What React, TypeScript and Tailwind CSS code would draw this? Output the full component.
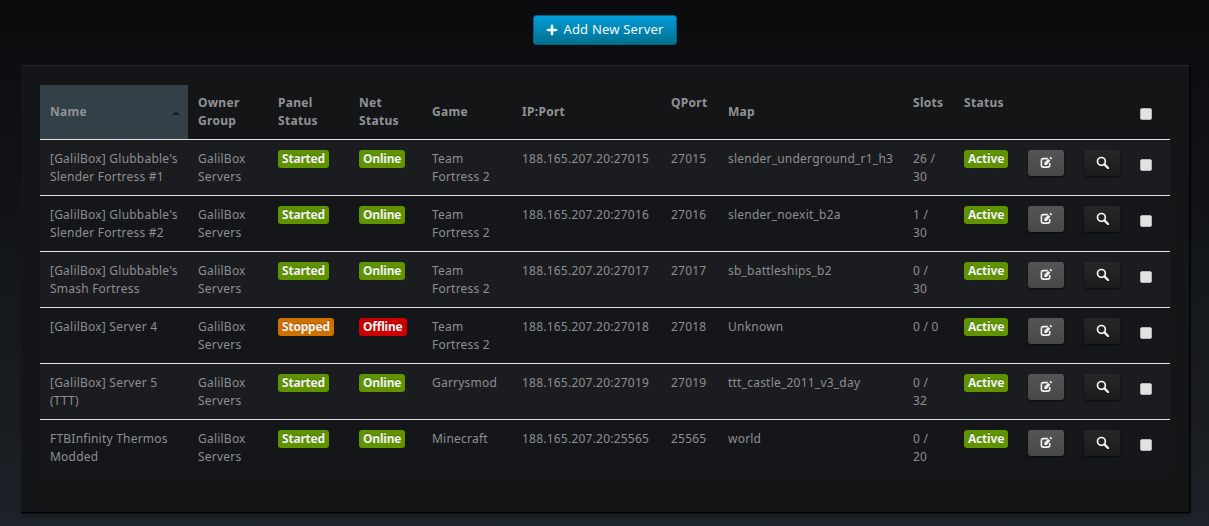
import { Plus } from 'lucide-react';

const servers = [
  { name: "[GalilBox] Glubbable's Slender Fortress #1", game: 'Team Fortress 2', ip: '188.165.207.20:27015', qport: '27015', map: 'slender_underground_r1_h3', slots: '26 / 30', up: true },
  { name: "[GalilBox] Glubbable's Slender Fortress #2", game: 'Team Fortress 2', ip: '188.165.207.20:27016', qport: '27016', map: 'slender_noexit_b2a', slots: '1 / 30', up: true },
  { name: "[GalilBox] Glubbable's Smash Fortress", game: 'Team Fortress 2', ip: '188.165.207.20:27017', qport: '27017', map: 'sb_battleships_b2', slots: '0 / 30', up: true },
  { name: '[GalilBox] Server 4', game: 'Team Fortress 2', ip: '188.165.207.20:27018', qport: '27018', map: 'Unknown', slots: '0 / 0', up: false },
  { name: '[GalilBox] Server 5 (TTT)', game: 'Garrysmod', ip: '188.165.207.20:27019', qport: '27019', map: 'ttt_castle_2011_v3_day', slots: '0 / 32', up: true },
  { name: 'FTBInfinity Thermos Modded', game: 'Minecraft', ip: '188.165.207.20:25565', qport: '25565', map: 'world', slots: '0 / 20', up: true },
];

const widths = [148, 80, 81, 73, 90, 149, 57, 185, 51, 64, 56, 56, 40];

function Badge({ color, children }: { color: string; children: string }) {
  return (
    <span className={`inline-block rounded-[3px] px-[4px] h-[18px] leading-[17px] text-[12px] font-bold tracking-[-0.2px] text-[#f2f2f2] align-top [text-shadow:0_-1px_0_rgba(0,0,0,0.25)] ${color}`}>
      {children}
    </span>
  );
}

function Check() {
  return <div className="size-[12px] rounded-[2px] bg-[#e2e2e2] border border-[#b5b5b5]" />;
}

function EditIcon() {
  return (
    <svg width="13" height="13" viewBox="0 0 13 13" fill="none" stroke="#f0f0f0" strokeWidth="1.6">
      <path d="M8 2.6H3.2Q1.4 2.6 1.4 4.4v4.8q0 1.9 1.9 1.9h4.6q1.8 0 1.8-1.9V7" />
      <path d="M4.4 6.6L4.4 9L6.8 9L10.4 4.6L8.3 3Z" fill="#f0f0f0" stroke="none" />
      <path d="M10 1.4L11.6 2.8" strokeWidth="1.7" />
    </svg>
  );
}

function SearchIcon() {
  return (
    <svg width="13" height="13" viewBox="0 0 13 13" fill="none" stroke="#f4f4f4">
      <circle cx="5.4" cy="5.4" r="3.9" strokeWidth="1.7" />
      <path d="M8.4 8.4L12 12" strokeWidth="2.3" strokeLinecap="round" />
    </svg>
  );
}

export default function App() {
  const th = 'px-[10px] text-left align-middle font-bold text-[12px] leading-[18px] text-[#8f9396] tracking-[0.3px]';
  const td = 'px-[10px] pt-[10px] align-top';
  const tdBadge = 'px-[10px] pt-[10px] align-top';

  return (
    <div className="w-[1209px] h-[526px] overflow-hidden bg-gradient-to-b from-[#0a0b0d] to-[#1d2228] font-['Noto_Sans','Open_Sans',sans-serif]">
      <div className="flex justify-center pt-[15px] h-[65px]">
        <button className="h-[30px] w-[144px] flex items-center justify-center gap-[4px] rounded-[3px] border border-[#04607f] bg-gradient-to-b from-[#049cdb] to-[#02708f] text-[13px] tracking-[0.2px] text-[#f4f8fa]">
          <Plus size={14} strokeWidth={4.5} />
          Add New Server
        </button>
      </div>

      <div className="ml-[21px] w-[1169px] h-[448px] bg-[#141517] border-t border-t-[#25272a] border-r border-r-black border-b border-b-black shadow-[1px_1px_2px_rgba(0,0,0,0.6)] pt-[19px] pl-[19px]">
        <table className="w-[1130px] table-fixed border-collapse text-[12px] leading-[18px] tracking-[0.22px] text-[#8c8f92]">
          <colgroup>
            {widths.map((w, i) => (
              <col key={i} width={w} />
            ))}
          </colgroup>
          <thead>
            <tr className="h-[54px] border-b border-[#e4e4e4]">
              <th className={`${th} bg-[#334047] relative`}>
                Name
                <span className="absolute right-[8px] top-[26px] border-x-[4px] border-x-transparent border-b-[4px] border-b-[#1a2024]" />
              </th>
              <th className={th}>Owner<br />Group</th>
              <th className={th}>Panel<br />Status</th>
              <th className={th}>Net<br />Status</th>
              <th className={th}>Game</th>
              <th className={th}>IP:Port</th>
              <th className={`${th} !align-top pt-[9px]`}>QPort</th>
              <th className={th}>Map</th>
              <th className={`${th} !align-top pt-[9px]`}>Slots</th>
              <th className={`${th} !align-top pt-[9px]`}>Status</th>
              <th className={th} />
              <th className={th} />
              <th className={th}><div className="mt-[4px]"><Check /></div></th>
            </tr>
          </thead>
          <tbody>
            {servers.map((s, i) => (
              <tr key={s.ip} className={`h-[56px] border-b border-[#e4e4e4] last:border-b-0 ${i % 2 === 0 ? 'bg-[#1b1c1f]' : 'bg-[#151619]'}`}>
                <td className={td}>{s.name}</td>
                <td className={td}>GalilBox Servers</td>
                <td className={tdBadge}>
                  {s.up ? <Badge color="bg-[#5f9300]">Started</Badge> : <Badge color="bg-[#cf7000]">Stopped</Badge>}
                </td>
                <td className={tdBadge}>
                  {s.up ? <Badge color="bg-[#5f9300]">Online</Badge> : <Badge color="bg-[#cc0000]">Offline</Badge>}
                </td>
                <td className={td}>{s.game}</td>
                <td className={td}>{s.ip}</td>
                <td className={td}>{s.qport}</td>
                <td className={td}>{s.map}</td>
                <td className={td}>{s.slots}</td>
                <td className={tdBadge}><Badge color="bg-[#5f9300]">Active</Badge></td>
                <td className={tdBadge}>
                  <button className="w-[36px] h-[26px] flex items-center justify-center rounded-[3px] bg-gradient-to-b from-[#555555] to-[#474747] shadow-[0_1px_2px_rgba(0,0,0,0.6)]">
                    <EditIcon />
                  </button>
                </td>
                <td className={tdBadge}>
                  <button className="w-[36px] h-[26px] flex items-center justify-center rounded-[3px] bg-gradient-to-b from-[#272727] to-[#1b1b1b] shadow-[0_1px_2px_rgba(0,0,0,0.6)]">
                    <SearchIcon />
                  </button>
                </td>
                <td className={tdBadge}><div className="mt-[9px]"><Check /></div></td>
              </tr>
            ))}
          </tbody>
        </table>
      </div>
    </div>
  );
}
